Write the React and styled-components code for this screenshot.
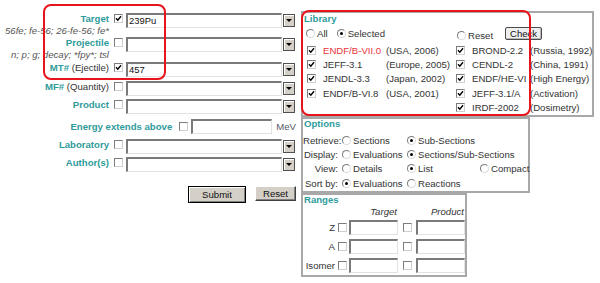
import React from 'react';
import styled, { createGlobalStyle } from 'styled-components';

const teal = '#2f9b9b';

const Global = createGlobalStyle`
  html, body { margin: 0; padding: 0; background: #fff; }
  body {
    font-family: "Liberation Sans", Arial, sans-serif;
    font-size: 9.6px;
    color: #333;
  }
`;

const Page = styled.div`
  position: relative;
  display: flex;
  width: 600px;
  height: 283px;
  overflow: hidden;
`;

const LeftCol = styled.div`
  width: 301px;
  flex: none;
  padding-top: 12px;
  box-sizing: border-box;
`;

const FieldRow = styled.div`
  display: grid;
  grid-template-columns: 110px 16px 170px;
  height: ${(p) => p.$h}px;
`;

const Label = styled.div`
  padding: 1px 1px 0 0;
  text-align: right;
  line-height: 12px;
  white-space: nowrap;
`;

const Strong = styled.span`
  color: ${teal};
  font-weight: bold;
`;

const Paren = styled.span`
  color: #333;
`;

const Hint = styled.div`
  font-style: italic;
  color: #555;
  line-height: 11px;
`;

const CheckCell = styled.div`
  padding: 2px 0 0 4px;
`;

const BoxEl = styled.span`
  display: inline-block;
  flex: none;
  box-sizing: border-box;
  width: 9px;
  height: 9px;
  border: 1px solid;
  border-color: #7c7c7c #cfcfcf #cfcfcf #7c7c7c;
  background: #fff;
  margin-left: ${(p) => p.$ml || 0}px;
  position: relative;
`;

const Tick = styled.svg`
  position: absolute;
  left: 0;
  top: 0;
  width: 7px;
  height: 7px;
`;

const CheckBox = ({ checked, ml }) => (
  <BoxEl $ml={ml}>
    {checked && (
      <Tick viewBox="0 0 7 7">
        <path d="M1 3.2 L2.8 5.2 L6 1.2" fill="none" stroke="#000" strokeWidth="1.4" />
      </Tick>
    )}
  </BoxEl>
);

const RadioEl = styled.span`
  display: inline-flex;
  flex: none;
  align-items: center;
  justify-content: center;
  box-sizing: border-box;
  width: 9px;
  height: 9px;
  border-radius: 50%;
  border: 1px solid;
  border-color: #7c7c7c #dadada #dadada #7c7c7c;
  background: #fff;
`;

const Dot = styled.span`
  width: 3px;
  height: 3px;
  border-radius: 50%;
  background: #000;
`;

const Radio = ({ checked }) => <RadioEl>{checked && <Dot />}</RadioEl>;

const Opt = styled.span`
  display: inline-flex;
  align-items: center;
  gap: 2px;
  white-space: nowrap;
  margin-left: ${(p) => p.$ml || 0}px;
  margin-top: ${(p) => p.$mt || 0}px;
`;

const SelectWrap = styled.div`
  display: flex;
  align-items: flex-start;
  margin-top: 1px;
`;

const SelectField = styled.div`
  width: 156px;
  height: 15px;
  box-sizing: border-box;
  border-style: solid;
  border-width: 2px 1px 1px 2px;
  border-color: #7a7a7a #e2e2e2 #e2e2e2 #7a7a7a;
  background: #fff;
  font-size: 9.4px;
  line-height: 12px;
  color: #111;
  padding-left: 1px;
`;

const ArrowBtn = styled.div`
  width: 12px;
  height: 13px;
  margin: 1px 0 0 1px;
  box-sizing: border-box;
  background: #d4d0c8;
  border: 1px solid #505050;
  box-shadow: inset 1px 1px 0 #fff;
  display: flex;
  align-items: center;
  justify-content: center;
`;

const Tri = styled.span`
  width: 0;
  height: 0;
  border-left: 3px solid transparent;
  border-right: 3px solid transparent;
  border-top: 3px solid #000;
`;

const Select = ({ value }) => (
  <SelectWrap>
    <SelectField>{value}</SelectField>
    <ArrowBtn>
      <Tri />
    </ArrowBtn>
  </SelectWrap>
);

const TextInput = styled.div`
  width: ${(p) => p.$w}px;
  height: 15px;
  flex: none;
  box-sizing: border-box;
  border-style: solid;
  border-width: 2px 1px 1px 2px;
  border-color: #7a7a7a #e2e2e2 #e2e2e2 #7a7a7a;
  background: #fff;
  margin-left: ${(p) => p.$ml || 0}px;
`;

const EnergyRow = styled.div`
  display: flex;
  justify-content: flex-end;
  align-items: center;
  width: 296px;
  height: 21px;
  padding-bottom: 2px;
  box-sizing: border-box;
  white-space: nowrap;
`;

const Unit = styled.span`
  color: #556;
  margin-left: 4px;
`;

const ButtonRow = styled.div`
  display: flex;
  align-items: flex-start;
  padding-left: 188px;
  margin-top: 11px;
`;

const Button = styled.div`
  box-sizing: border-box;
  width: ${(p) => p.$w}px;
  height: ${(p) => (p.$default ? 17 : 15)}px;
  margin-left: ${(p) => p.$ml || 0}px;
  background: #d4d0c8;
  border: 1px solid;
  border-color: ${(p) => (p.$default ? '#000' : '#fff #404040 #404040 #fff')};
  box-shadow: ${(p) =>
    p.$default ? 'inset 1px 1px 0 #fff, inset -1px -1px 0 #808080' : 'inset -1px -1px 0 #808080'};
  color: #111;
  display: flex;
  align-items: center;
  justify-content: center;
  font-size: 9.6px;
`;

const RightCol = styled.div`
  display: flex;
  flex-direction: column;
  align-items: flex-start;
  padding-top: 11px;
`;

const Panel = styled.div`
  box-sizing: border-box;
  width: ${(p) => p.$w}px;
  border: 2px solid #a8a8a8;
`;

const PanelTitle = styled.div`
  color: ${teal};
  font-weight: bold;
  line-height: ${(p) => p.$lh}px;
  height: ${(p) => p.$h}px;
  padding-left: 1px;
`;

const LibHead = styled.div`
  display: grid;
  grid-template-columns: 150px 1fr;
  height: 19px;
  align-items: center;
`;

const HeadCell = styled.div`
  display: flex;
  align-items: center;
`;

const CheckButton = styled.div`
  box-sizing: border-box;
  width: 37px;
  height: 13px;
  margin-left: 12px;
  border: 1px solid #4a4a4a;
  border-radius: 2px;
  background: #efefef;
  box-shadow: inset -1px -1px 0 #b8b8b8;
  color: #111;
  line-height: 11px;
  text-align: center;
`;

const LibGrid = styled.div`
  display: grid;
  grid-template-columns: 20px 63px 67px 19px 58px 1fr;
  grid-auto-rows: 14.4px;
  align-items: center;
  white-space: nowrap;
`;

const Cell = styled.div`
  display: flex;
  align-items: center;
  color: ${(p) => p.$color || '#333'};
`;

const OptGrid = styled.div`
  display: grid;
  grid-template-columns: 39px 65px 73px 1fr;
  grid-auto-rows: 14.4px;
  align-items: center;
  white-space: nowrap;
`;

const RowLabel = styled.div`
  text-align: right;
  padding-right: ${(p) => p.$pr}px;
  color: #333;
`;

const RangeGrid = styled.div`
  display: grid;
  grid-template-columns: 35px 11px 50px 16px 50px;
  grid-auto-rows: 19px;
  align-items: center;
  white-space: nowrap;
`;

const RangeHead = styled.div`
  display: grid;
  grid-template-columns: 35px 11px 50px 16px 50px;
  height: 12px;
  line-height: 12px;
  font-style: italic;
  color: #333;
`;

const HeadText = styled.div`
  grid-column: ${(p) => p.$col};
  text-align: right;
  padding-right: ${(p) => p.$pr}px;
`;

const Highlight = styled.div`
  position: absolute;
  left: ${(p) => p.$x}px;
  top: ${(p) => p.$y}px;
  width: ${(p) => p.$w}px;
  height: ${(p) => p.$h}px;
  box-sizing: border-box;
  border: 2px solid #e8141c;
  border-radius: 8px;
  pointer-events: none;
`;

const fields = [
  { label: 'Target', hint: '56fe; fe-56; 26-fe-56; fe*', checked: true, value: '239Pu', h: 24 },
  { label: 'Projectile', hint: 'n; p; g; decay; *fpy*; tsl', checked: false, value: '', h: 25 },
  { label: 'MT#', paren: ' (Ejectile)', checked: true, value: '457', h: 19 },
  { label: 'MF#', paren: ' (Quantity)', checked: false, value: '', h: 18 },
  { label: 'Product', checked: false, value: '', h: 19 },
];

const fields2 = [
  { label: 'Laboratory', checked: false, value: '', h: 18 },
  { label: 'Author(s)', checked: false, value: '', h: 19 },
];

const libs = [
  ['ENDF/B-VII.0', '(USA, 2006)', 'BROND-2.2', '(Russia, 1992)', true],
  ['JEFF-3.1', '(Europe, 2005)', 'CENDL-2', '(China, 1991)'],
  ['JENDL-3.3', '(Japan, 2002)', 'ENDF/HE-VI', '(High Energy)'],
  ['ENDF/B-VI.8', '(USA, 2001)', 'JEFF-3.1/A', '(Activation)'],
  [null, null, 'IRDF-2002', '(Dosimetry)'],
];

const options = [
  ['Retrieve:', [['Sections', false], ['Sub-Sections', true], null]],
  ['Display:', [['Evaluations', false], ['Sections/Sub-Sections', true], null]],
  ['View:', [['Details', false], ['List', true], ['Compact', false]]],
  ['Sort by:', [['Evaluations', true], ['Reactions', false], null]],
];

const Field = ({ f }) => (
  <FieldRow $h={f.h}>
    <Label>
      <Strong>{f.label}</Strong>
      {f.paren && <Paren>{f.paren}</Paren>}
      {f.hint && <Hint>{f.hint}</Hint>}
    </Label>
    <CheckCell>
      <CheckBox checked={f.checked} />
    </CheckCell>
    <Select value={f.value} />
  </FieldRow>
);

export default function App() {
  return (
    <Page>
      <Global />
      <LeftCol>
        {fields.map((f) => (
          <Field key={f.label} f={f} />
        ))}
        <EnergyRow>
          <Strong>Energy extends above</Strong>
          <CheckBox ml={7} />
          <TextInput $w={81} $ml={3} />
          <Unit>MeV</Unit>
        </EnergyRow>
        {fields2.map((f) => (
          <Field key={f.label} f={f} />
        ))}
        <ButtonRow>
          <Button $w={58} $default>Submit</Button>
          <Button $w={41} $ml={9}>Reset</Button>
        </ButtonRow>
      </LeftCol>

      <RightCol>
        <Panel $w={293}>
          <PanelTitle $lh={11} $h={11}>Library</PanelTitle>
          <LibHead>
            <HeadCell>
              <Opt $ml={3}>
                <Radio /> All
              </Opt>
              <Opt $ml={9}>
                <Radio checked /> Selected
              </Opt>
            </HeadCell>
            <HeadCell>
              <Opt $ml={4} $mt={4}>
                <Radio /> Reset
              </Opt>
              <CheckButton>Check</CheckButton>
            </HeadCell>
          </LibHead>
          <LibGrid>
            {libs.map((r, i) => (
              <React.Fragment key={i}>
                <Cell>{r[0] && <CheckBox checked ml={4} />}</Cell>
                <Cell $color={r[4] ? '#e8323c' : undefined}>{r[0]}</Cell>
                <Cell>{r[1]}</Cell>
                <Cell>
                  <CheckBox checked ml={3} />
                </Cell>
                <Cell>{r[2]}</Cell>
                <Cell>{r[3]}</Cell>
              </React.Fragment>
            ))}
          </LibGrid>
        </Panel>

        <Panel $w={229}>
          <PanelTitle $lh={10} $h={14}>Options</PanelTitle>
          <OptGrid>
            {options.map(([label, opts]) => (
              <React.Fragment key={label}>
                <RowLabel $pr={4}>{label}</RowLabel>
                {opts.map((o, j) => (
                  <Cell key={j}>
                    {o && (
                      <Opt>
                        <Radio checked={o[1]} /> {o[0]}
                      </Opt>
                    )}
                  </Cell>
                ))}
              </React.Fragment>
            ))}
          </OptGrid>
        </Panel>

        <Panel $w={166}>
          <PanelTitle $lh={10} $h={11}>Ranges</PanelTitle>
          <RangeHead>
            <HeadText $col={3} $pr={2}>Target</HeadText>
            <HeadText $col={5} $pr={1}>Product</HeadText>
          </RangeHead>
          <RangeGrid>
            {['Z', 'A', 'Isomer'].map((l) => (
              <React.Fragment key={l}>
                <RowLabel $pr={3}>{l}</RowLabel>
                <Cell>
                  <CheckBox />
                </Cell>
                <Cell>
                  <TextInput $w={49} />
                </Cell>
                <Cell>
                  <CheckBox ml={4} />
                </Cell>
                <Cell>
                  <TextInput $w={49} $ml={1} />
                </Cell>
              </React.Fragment>
            ))}
          </RangeGrid>
        </Panel>
      </RightCol>

      <Highlight $x={43} $y={4} $w={123} $h={76} />
      <Highlight $x={301} $y={10} $w={230} $h={106} />
    </Page>
  );
}
